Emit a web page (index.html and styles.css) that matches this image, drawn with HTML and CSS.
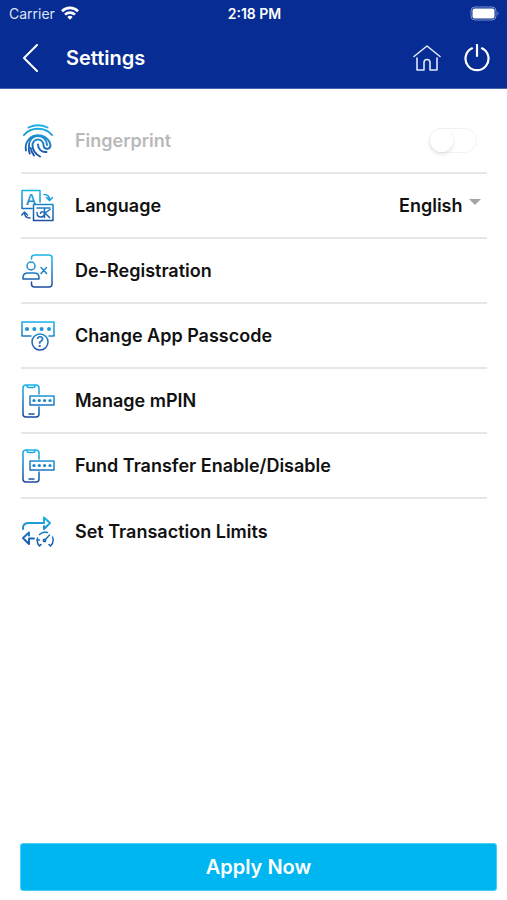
FILE: index.html
```html
<!DOCTYPE html>
<html lang="en">
<head>
    <meta charset="UTF-8">
    <meta name="viewport" content="width=device-width, initial-scale=1.0">
    <title>Settings</title>
    <link rel="stylesheet" href="styles.css">
</head>
<body>
    <svg class="defs" width="0" height="0" aria-hidden="true">
        <defs>
            <linearGradient id="blue" gradientUnits="userSpaceOnUse" x1="8" y1="0" x2="4" y2="34">
                <stop offset="0" stop-color="#18b4e8"/>
                <stop offset="0.5" stop-color="#1c7cc4"/>
                <stop offset="1" stop-color="#1a419c"/>
            </linearGradient>
        </defs>
    </svg>

    <header class="header">
        <div class="status-bar">
            <span class="carrier">Carrier
                <svg width="18" height="14" viewBox="0 0 18 14" fill="none" stroke="#fff" stroke-width="2.6" aria-hidden="true">
                    <path d="M1 5.2a11.4 11.4 0 0 1 16 0M4 8.6a7.2 7.2 0 0 1 10 0"/>
                    <path d="M9 13.8 6.3 11a3.8 3.8 0 0 1 5.4 0z" fill="#fff" stroke="none"/>
                </svg>
            </span>
            <span class="time">2:18 PM</span>
            <span class="battery">
                <svg width="30" height="15" viewBox="0 0 30 15" aria-hidden="true">
                    <rect x="1" y="1" width="25" height="13" rx="4" fill="none" stroke="#7d92cf"/>
                    <rect x="2.500" y="2.500" width="22" height="10" rx="2" fill="#fff"/>
                    <path d="M27.5 5.5q2 2 0 4z" fill="#7d92cf"/>
                </svg>
            </span>
        </div>
        <div class="title-bar">
            <button class="icon-btn" aria-label="Back">
                <svg width="18" height="28" viewBox="0 0 18 28" fill="none" stroke="#fff" stroke-width="2" stroke-linecap="round" stroke-linejoin="round">
                    <path d="M15 1 2 14l13 13"/>
                </svg>
            </button>
            <h1>Settings</h1>
            <button class="icon-btn" aria-label="Home">
                <svg width="28" height="28" viewBox="0 0 28 28" fill="none" stroke="#dfe8ff" stroke-width="1.6" stroke-linecap="round" stroke-linejoin="round">
                    <path d="M1 12.5 14 2l13 10.5M4 14v12h7v-7.5a3 3 0 0 1 6 0V26h7V14"/>
                </svg>
            </button>
            <button class="icon-btn" aria-label="Log out">
                <svg width="28" height="28" viewBox="0 0 28 28" fill="none" stroke="#fff" stroke-width="2.2" stroke-linecap="round">
                    <path d="M9 4.3a11.5 11.5 0 1 0 10 0M14 1v11"/>
                </svg>
            </button>
        </div>
    </header>

    <main class="settings">
        <div class="row disabled">
            <svg class="icon" viewBox="0 0 34 34">
                <g stroke-width="1.9">
                    <path d="M7.500 3.500Q17-1 26.500 3.500M3 11Q8 4.800 17 4.800T31 11"/>
                    <path d="M5 26.500A12.500 12.500 0 1 1 29.500 21c0 5-7 5-7 0a5.500 5.500 0 0 0-11 0c0 5 3 9 7.500 11.500"/>
                    <path d="M8.800 29.500C7 26 8 24 8 21a9 9 0 0 1 18 0M13 31.500c-1.500-2-3-5-3.300-7.500"/>
                    <path d="M17 20.500c0 4.500 3.500 8 8.500 7.500"/>
                </g>
            </svg>
            <label class="label" for="fingerprint">Fingerprint</label>
            <input type="checkbox" id="fingerprint" class="toggle" disabled>
        </div>
        <div class="row">
            <svg class="icon" viewBox="0 0 34 34">
                <path d="M19 13V1.500H1v18h10M12.500 15.500H32v16H12.500z"/>
                <path d="M23 5.500c4 0 5.500 1.500 5.500 5.500M25.500 8.500l3 3 3-3M9 29c-4 0-5.500-2-5.500-5.500M.8 26l2.700-3L6.500 26"/>
                <path d="M16 19h13M23.500 19v9.500M29 20.500l-5 3.500 4.500 4.500M23.500 24c-1.500-2-4-1.500-4 .5M16 23.500c0 6 7.500 6 7.500.500"/>
                <text class="letter" x="10" y="16">A</text>
            </svg>
            <label class="label" for="language">Language</label>
            <div class="select">
                <select id="language">
                    <option>English</option>
                </select>
            </div>
        </div>
        <a class="row" href="#">
            <svg class="icon" viewBox="0 0 34 34">
                <path d="M10.500 5V4q0-3 3-3H28q3 0 3 3v26q0 3-3 3H13.500q-3 0-3-3v-2"/>
                <circle cx="10" cy="12" r="4"/>
                <path d="M2 25v-1.500q0-4.500 5-4.500h6q5 0 5 4.500V25zM20 13.500l5.500 6M25.500 13.500l-5.500 6"/>
            </svg>
            <span class="label">De-Registration</span>
        </a>
        <a class="row" href="#">
            <svg class="icon" viewBox="0 0 34 34">
                <path d="M10 17H1V3h32v14h-5"/>
                <g class="dots">
                    <circle cx="6" cy="10" r="2"/>
                    <circle cx="13.300" cy="10" r="2"/>
                    <circle cx="20.600" cy="10" r="2"/>
                    <circle cx="28" cy="10" r="2"/>
                </g>
                <circle cx="19" cy="23" r="8"/>
                <text class="letter" x="19" y="28">?</text>
            </svg>
            <span class="label">Change App Passcode</span>
        </a>
        <a class="row" href="#">
            <svg class="icon" viewBox="0 0 34 34">
                <path d="M18 10V4q0-3-3-3H5Q2 1 2 4v26q0 3 3 3h10q3 0 3-3v-7M6 1.500q0 2 2 2h4q2 0 2-2M8 30h5M9 12h24v9H9z"/>
                <g class="dots">
                    <circle cx="13" cy="16.500" r="1.600"/>
                    <circle cx="18.300" cy="16.500" r="1.600"/>
                    <circle cx="23.600" cy="16.500" r="1.600"/>
                    <circle cx="29" cy="16.500" r="1.600"/>
                </g>
            </svg>
            <span class="label">Manage mPIN</span>
        </a>
        <a class="row" href="#">
            <svg class="icon" viewBox="0 0 34 34">
                <path d="M18 10V4q0-3-3-3H5Q2 1 2 4v26q0 3 3 3h10q3 0 3-3v-7M6 1.500q0 2 2 2h4q2 0 2-2M8 30h5M9 12h24v9H9z"/>
                <g class="dots">
                    <circle cx="13" cy="16.500" r="1.600"/>
                    <circle cx="18.300" cy="16.500" r="1.600"/>
                    <circle cx="23.600" cy="16.500" r="1.600"/>
                    <circle cx="29" cy="16.500" r="1.600"/>
                </g>
            </svg>
            <span class="label">Fund Transfer Enable/Disable</span>
        </a>
        <a class="row" href="#">
            <svg class="icon" viewBox="0 0 34 34">
                <g stroke-width="1.900">
                    <path d="M2 14v-1Q2 8 8 8h15V2.500L29 8l-6 6v-3"/>
                    <path d="M13 23.500H8V29l-6-6 6-5.500v3"/>
                </g>
                <path d="M18.500 31a8.200 8.200 0 0 1-2-8M18.500 19.500a8.200 8.200 0 0 1 8-2M31.500 22a8.200 8.200 0 0 1-2 9M18.500 31l1.500-1.500M29.500 31 28 29.500M16.500 25h2M24 25l4.500-5"/>
                <circle cx="23.500" cy="25.500" r="1.200"/>
            </svg>
            <span class="label">Set Transaction Limits</span>
        </a>
    </main>

    <footer class="footer">
        <button class="apply-btn">Apply Now</button>
    </footer>
</body>
</html>
```

FILE: styles.css
```css
* {
    box-sizing: border-box;
}
body {
    display: flex;
    flex-direction: column;
    min-height: 100vh;
    margin: 0;
    font-family: Inter, "Open Sans", sans-serif;
    background-color: #fff;
    color: #111;
}
.defs {
    position: absolute;
}
.header {
    background-color: #072c93;
    color: #fff;
    border-bottom: 1px solid #4a65b0;
}
.status-bar {
    display: grid;
    grid-template-columns: 1fr auto 1fr;
    align-items: center;
    height: 28px;
    padding: 0 7px 2px 9px;
    font-size: 14px;
}
.carrier {
    display: flex;
    align-items: center;
    gap: 6px;
    color: #dde4f6;
}
.time {
    font-weight: 600;
}
.battery {
    display: flex;
    justify-content: flex-end;
}
.title-bar {
    display: flex;
    align-items: center;
    gap: 22px;
    height: 60px;
    padding: 0 16px 0 22px;
}
.title-bar h1 {
    flex: 1;
    margin: 0 0 0 4px;
    font-size: 20px;
    font-weight: 600;
}
.icon-btn {
    display: flex;
    padding: 0;
    border: none;
    background: none;
    cursor: pointer;
}
.settings {
    flex: 1;
    padding: 20px 20px 0 21px;
}
.row {
    display: flex;
    align-items: center;
    gap: 20px;
    height: 65px;
    border-bottom: 2px solid #e6e6e6;
    color: inherit;
    text-decoration: none;
}
.row:last-child {
    border-bottom: none;
}
.label {
    flex: 1;
    font-size: 18px;
    font-weight: 600;
}
.disabled .label {
    color: #b9b9b9;
}
.icon {
    width: 34px;
    height: 34px;
    fill: none;
    stroke: url(#blue);
    stroke-width: 1.5px;
    stroke-linecap: round;
    stroke-linejoin: round;
}
.dots {
    fill: url(#blue);
    stroke: none;
}
.letter {
    fill: url(#blue);
    stroke: none;
    font-size: 15px;
    font-weight: 500;
    text-anchor: middle;
}
.toggle {
    appearance: none;
    width: 48px;
    height: 25px;
    margin: 0 10px 0 0;
    border: 1px solid #f3f3f3;
    border-radius: 13px;
    background-color: #fff;
}
.toggle::before {
    content: "";
    display: block;
    width: 23px;
    height: 23px;
    border-radius: 50%;
    background-color: #fff;
    box-shadow: 0 2px 4px rgba(0, 0, 0, 0.12);
}
.select {
    display: flex;
    gap: 6px;
    padding-right: 6px;
}
.select::after {
    content: "";
    height: 0;
    margin-top: 4px;
    border: 6px solid transparent;
    border-top-color: #a5a5a5;
    border-bottom: none;
}
.select select {
    appearance: none;
    padding: 0;
    border: none;
    background: none;
    color: inherit;
    font: inherit;
    font-size: 18px;
    font-weight: 600;
}
.footer {
    padding: 0 10px 9px 20px;
}
.apply-btn {
    width: 100%;
    height: 48px;
    border: 1px solid #45cef5;
    border-radius: 3px;
    background-color: #00b6f0;
    color: #fff;
    font: inherit;
    font-size: 20px;
    font-weight: 600;
    cursor: pointer;
}
```
